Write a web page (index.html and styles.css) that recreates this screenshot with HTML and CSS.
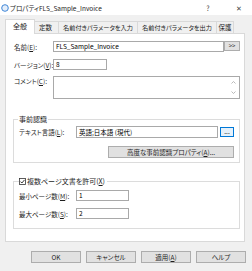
FILE: index.html
```html
<!DOCTYPE html>
<html lang="ja">
<head>
    <meta charset="UTF-8">
    <title>プロパティFLS_Sample_Invoice</title>
    <link rel="stylesheet" href="styles.css">
</head>
<body>

<div class="window">
    <div class="titlebar">
        <svg class="app-icon" width="8" height="8" viewBox="0 0 8 8">
            <circle cx="4" cy="4" r="3.3" fill="#e4eefa" stroke="#3f86d6" stroke-width="1"/>
        </svg>
        <span class="title">プロパティFLS_Sample_Invoice</span>
        <span class="help">?</span>
        <span class="close">✕</span>
    </div>

    <div class="dialog">
        <div class="tabs">
            <div class="tab active t-general">全般</div>
            <div class="tab t-const">定数</div>
            <div class="tab t-param">名前付きパラメータを入力</div>
            <div class="tab t-param">名前付きパラメータを出力</div>
            <div class="tab t-protect">保護</div>
        </div>

        <div class="panel">
            <div class="row">
                <label class="label">名前(<u>E</u>):</label>
                <div class="field">
                    <div class="input grow">FLS_Sample_Invoice</div>
                    <div class="btn small">&gt;&gt;</div>
                </div>
            </div>
            <div class="row version">
                <label class="label">バージョン(<u>V</u>):</label>
                <div class="field">
                    <div class="input short">8</div>
                </div>
            </div>
            <div class="row comment">
                <label class="label">コメント(<u>C</u>):</label>
                <div class="field">
                    <div class="textarea">
                        <div class="text"></div>
                        <div class="scroll">
                            <svg width="5" height="3" viewBox="0 0 5 3"><polyline points="0.5,2.5 2.5,0.5 4.5,2.5" fill="none" stroke="#a8a8a8" stroke-width="0.8"/></svg>
                            <svg width="5" height="3" viewBox="0 0 5 3"><polyline points="0.5,0.5 2.5,2.5 4.5,0.5" fill="none" stroke="#a8a8a8" stroke-width="0.8"/></svg>
                        </div>
                    </div>
                </div>
            </div>

            <fieldset class="group ocr">
                <legend>事前認識</legend>
                <div class="grow-row">
                    <label class="label wide">テキスト言語(<u>L</u>):</label>
                    <div class="input grow tall">英語;日本語 (現代)</div>
                    <div class="btn dots">...</div>
                </div>
                <div class="adv-row">
                    <div class="btn adv">高度な事前認識プロパティ(<u>A</u>)...</div>
                </div>
            </fieldset>

            <fieldset class="group pages">
                <legend>
                    <svg class="check" width="7" height="7" viewBox="0 0 7 7">
                        <rect x="0.5" y="0.5" width="6" height="6" fill="#fff" stroke="#333" stroke-width="0.8"/>
                        <polyline points="1.5,3.6 2.9,5 5.5,1.9" fill="none" stroke="#222" stroke-width="0.9"/>
                    </svg>
                    複数ページ文書を許可(<u>X</u>)
                </legend>
                <div class="grow-row">
                    <label class="label wide">最小ページ数(<u>M</u>):</label>
                    <div class="input num">1</div>
                </div>
                <div class="grow-row second">
                    <label class="label wide">最大ページ数(<u>S</u>):</label>
                    <div class="input num">2</div>
                </div>
            </fieldset>
        </div>

        <div class="buttons">
            <div class="btn">OK</div>
            <div class="btn">キャンセル</div>
            <div class="btn">適用(<u>A</u>)</div>
            <div class="btn">ヘルプ</div>
        </div>
    </div>
</div>

</body>
</html>
```

FILE: styles.css
```css
* {
    margin: 0;
    padding: 0;
    box-sizing: border-box;
}

body {
    width: 252px;
    height: 271px;
    overflow: hidden;
    background-color: #f0f0f0;
    font-family: "Noto Sans CJK JP", sans-serif;
    font-size: 7px;
    line-height: 10px;
    color: #1e1e1e;
    font-feature-settings: "palt";
}

u {
    text-decoration: underline;
    text-underline-offset: 1px;
}

.window {
    height: 271px;
}

/* タイトルバー */
.titlebar {
    height: 15px;
    background-color: #ffffff;
    display: flex;
    align-items: center;
    padding-left: 1px;
    padding-right: 8px;
}

.app-icon {
    margin-right: 1px;
}

.title {
    flex: 1;
    white-space: nowrap;
    font-size: 6.5px;
}

.help,
.close {
    width: 10px;
    text-align: center;
    color: #444444;
}

.help {
    margin-right: 21px;
}

/* 本体 */
.dialog {
    padding: 4px 8px 0 5px;
}

.tabs {
    display: flex;
    align-items: flex-end;
    height: 14px;
    padding-left: 2px;
}

.tab {
    height: 12px;
    border: 1px solid #d9d9d9;
    border-bottom: none;
    margin-left: -1px;
    background-color: #f0f0f0;
    white-space: nowrap;
    overflow: hidden;
    text-align: center;
    font-size: 6.5px;
    line-height: 11px;
}

.t-const {
    width: 27px;
}

.t-param {
    width: 80px;
    font-size: 6.2px;
}

.t-protect {
    width: 18px;
}

.tab.active {
    width: 30px;
    height: 15px;
    margin: 0 -2px -1px -2px;
    background-color: #ffffff;
    position: relative;
    z-index: 1;
    font-size: 7px;
    line-height: 12px;
}

.panel {
    width: 240px;
    height: 209px;
    background-color: #ffffff;
    border: 1px solid #d9d9d9;
    padding: 7px 4px 0 7px;
}

.row {
    display: flex;
    align-items: center;
}

.row.version {
    margin-top: 7px;
}

.row.comment {
    margin-top: 6px;
    align-items: flex-start;
}

.label {
    width: 40px;
    padding-left: 1px;
    white-space: nowrap;
    font-size: 6.5px;
}

.label.wide {
    width: 57px;
    padding-left: 0;
}

.field {
    flex: 1;
    display: flex;
}

.input {
    height: 11px;
    border: 1px solid #a9a9a9;
    background-color: #ffffff;
    padding-left: 2px;
    font-size: 6.5px;
    line-height: 9px;
    color: #000000;
    white-space: nowrap;
    overflow: hidden;
}

.input.grow {
    flex: 1;
}

.input.tall {
    height: 12px;
    line-height: 10px;
}

.input.short {
    width: 54px;
}

.input.num {
    width: 53px;
}

.textarea {
    flex: 1;
    height: 23px;
    border: 1px solid #a9a9a9;
    display: flex;
}

.textarea .text {
    flex: 1;
}

.scroll {
    width: 11px;
    display: flex;
    flex-direction: column;
    align-items: center;
    justify-content: space-between;
    padding: 4px 0 4px;
}

.scroll svg {
    display: block;
}

/* ボタン */
.btn {
    height: 12px;
    width: 50px;
    background-color: #e1e1e1;
    border: 1px solid #adadad;
    text-align: center;
    line-height: 10px;
    white-space: nowrap;
    font-size: 6.5px;
}

.btn.small {
    width: 16px;
    height: 10px;
    font-size: 6px;
    line-height: 8px;
}

.btn.dots {
    width: 14px;
    height: 10px;
    margin-left: 2px;
    border-color: #0078d7;
    background-color: #e5f1fb;
    line-height: 6px;
}

.btn.adv {
    width: 126px;
}

/* グループ */
.group {
    border: 1px solid #dcdcdc;
    padding: 2px 5px 4px 5px;
}

.group legend {
    padding: 0 1px;
    margin-left: -1px;
    white-space: nowrap;
}

.group.ocr {
    margin-top: 15px;
}

.group.pages {
    margin-top: 13px;
    padding-top: 4px;
    padding-bottom: 9px;
}

.group.pages legend {
    margin-left: 0;
    padding: 0 2px 0 0;
    display: flex;
    align-items: center;
}

.check {
    margin-right: 1px;
}

.grow-row {
    display: flex;
    align-items: center;
}

.grow-row.second {
    margin-top: 7px;
}

.adv-row {
    display: flex;
    justify-content: flex-end;
    margin-top: 8px;
}

.buttons {
    display: flex;
    justify-content: flex-end;
    gap: 5px;
    margin-top: 9px;
    margin-right: -2px;
}
```
